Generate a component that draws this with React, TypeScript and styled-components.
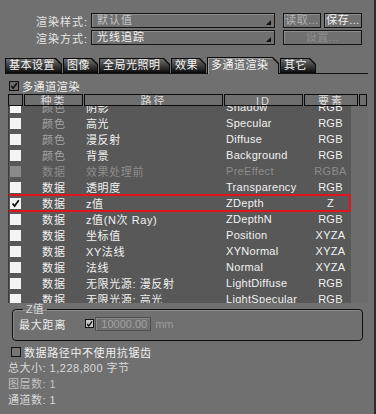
import styled, { createGlobalStyle } from "styled-components";

const GlobalStyle = createGlobalStyle`
  html, body {
    margin: 0;
    padding: 0;
    background: #707070;
  }
  body {
    font-family: "Liberation Sans", "Noto Sans CJK SC", sans-serif;
    font-size: 11px;
  }
`;

type Pass = {
  kind: string;
  path: string;
  id: string;
  elem: string;
  disabled?: boolean;
  checked?: boolean;
  marked?: boolean;
};

const passes: Pass[] = [
  { kind: "颜色", path: "阴影", id: "Shadow", elem: "RGB" },
  { kind: "颜色", path: "高光", id: "Specular", elem: "RGB" },
  { kind: "颜色", path: "漫反射", id: "Diffuse", elem: "RGB" },
  { kind: "颜色", path: "背景", id: "Background", elem: "RGB" },
  { kind: "数据", path: "效果处理前", id: "PreEffect", elem: "RGBA", disabled: true },
  { kind: "数据", path: "透明度", id: "Transparency", elem: "RGB" },
  { kind: "数据", path: "z值", id: "ZDepth", elem: "Z", checked: true, marked: true },
  { kind: "数据", path: "z值(N次 Ray)", id: "ZDepthN", elem: "RGB" },
  { kind: "数据", path: "坐标值", id: "Position", elem: "XYZA" },
  { kind: "数据", path: "XY法线", id: "XYNormal", elem: "XYZA" },
  { kind: "数据", path: "法线", id: "Normal", elem: "XYZA" },
  { kind: "数据", path: "无限光源: 漫反射", id: "LightDiffuse", elem: "RGB" },
  { kind: "数据", path: "无限光源: 高光", id: "LightSpecular", elem: "RGB" },
];

const tabs = ["基本设置", "图像", "全局光照明", "效果", "多通道渲染", "其它"];
const tabWidths = [57, 35, 71, 35, 72, 36];

function Check({ color = "#111" }: { color?: string }) {
  return (
    <svg width="9" height="9" viewBox="0 0 9 9">
      <path d="M1.5 4.5 L3.6 7 L7.8 1.2" stroke={color} strokeWidth="1.8" fill="none" />
    </svg>
  );
}

function App() {
  return (
    <Panel>
      <GlobalStyle />
      <FormRow>
        <FieldLabel>渲染样式:</FieldLabel>
        <Select $dim>默认值</Select>
        <ButtonGroup>
          <Button $w={38} $tone="dim">读取...</Button>
          <Button $w={38}>保存...</Button>
        </ButtonGroup>
      </FormRow>
      <FormRow>
        <FieldLabel>渲染方式:</FieldLabel>
        <Select>光线追踪</Select>
        <ButtonGroup>
          <Button $w={79} $tone="off">设置...</Button>
        </ButtonGroup>
      </FormRow>

      <TabBar>
        {tabs.map((t, i) => (
          <Tab key={t} $active={i === 4} $w={tabWidths[i]}>
            <TabFace $active={i === 4}>{t}</TabFace>
          </Tab>
        ))}
      </TabBar>

      <CheckRow>
        <Box $fill="#6a6a6a">
          <Check />
        </Box>
        <span>多通道渲染</span>
      </CheckRow>

      <Table>
        <HeadRow>
          <HeadCell />
          <HeadCell>种类</HeadCell>
          <HeadCell>路径</HeadCell>
          <HeadCell>ID</HeadCell>
          <HeadCell>要素</HeadCell>
          <HeadCell />
        </HeadRow>
        <BodyWrap>
          <List>
            <ListInner>
              {passes.map((p) => (
                <Row key={p.id} $marked={p.marked} $disabled={p.disabled}>
                  <RowBoxCell>
                    <RowBox $disabled={p.disabled}>{p.checked && <Check />}</RowBox>
                  </RowBoxCell>
                  <KindCell $color={p.kind === "颜色" ? "#a4a4a4" : undefined}>{p.kind}</KindCell>
                  <PathCell>{p.path}</PathCell>
                  <IdCell>{p.id}</IdCell>
                  <ElemCell>{p.elem}</ElemCell>
                </Row>
              ))}
            </ListInner>
          </List>
          <Track />
        </BodyWrap>
      </Table>

      <Group>
        <Legend>Z值</Legend>
        <GroupRow>
          <span>最大距离</span>
          <Box $fill="#c4c4c4" $small>
            <Check />
          </Box>
          <NumberInput>10000.00</NumberInput>
          <Unit>mm</Unit>
        </GroupRow>
      </Group>

      <CheckRow $tight>
        <Box $fill="#767676" />
        <span>数据路径中不使用抗锯齿</span>
      </CheckRow>

      <Info>
        <InfoLine>总大小: 1,228,800 字节</InfoLine>
        <InfoLine $dim>图层数: 1</InfoLine>
        <InfoLine>通道数: 1</InfoLine>
      </Info>
    </Panel>
  );
}

export default App;

const Panel = styled.div`
  position: relative;
  width: 376px;
  height: 414px;
  box-sizing: border-box;
  padding-top: 13px;
  background: #707070;
  border-right: 2px solid #2c2c2c;
  color: #ececec;
  overflow: hidden;
  display: flex;
  flex-direction: column;
`;

const FormRow = styled.div`
  display: flex;
  align-items: center;
  height: 15px;
  margin-bottom: 2px;
`;

const FieldLabel = styled.div`
  width: 88px;
  padding-right: 3px;
  text-align: right;
  letter-spacing: 1px;
  color: #e6e6e6;
`;

const Select = styled.div<{ $dim?: boolean }>`
  position: relative;
  width: 184px;
  height: 15px;
  box-sizing: border-box;
  border: 1px solid #141414;
  box-shadow: inset 1px 1px 0 #8e8e8e;
  padding-left: 5px;
  line-height: 13px;
  letter-spacing: 1px;
  color: ${(p) => (p.$dim ? "#c4c4c4" : "#f2f2f2")};

  &::after {
    content: "";
    position: absolute;
    right: 3px;
    bottom: 2px;
    border-left: 5px solid transparent;
    border-bottom: 5px solid #111;
  }
`;

const ButtonGroup = styled.div`
  display: flex;
  gap: 3px;
  margin-left: 8px;
`;

const Button = styled.div<{ $w: number; $tone?: "dim" | "off" }>`
  width: ${(p) => p.$w}px;
  height: 15px;
  box-sizing: border-box;
  border: 1px solid #141414;
  box-shadow: inset 1px 1px 0 #8e8e8e;
  text-align: center;
  line-height: 13px;
  letter-spacing: 0.5px;
  color: ${(p) => (p.$tone === "dim" ? "#b2b2b2" : p.$tone === "off" ? "#8e8e8e" : "#f2f2f2")};
`;

const TabBar = styled.div`
  display: flex;
  align-items: flex-end;
  gap: 1px;
  width: 363px;
  height: 17px;
  margin: 9px 0 0 5px;
  border-bottom: 1px solid #111;
`;

const Tab = styled.div<{ $active?: boolean; $w: number }>`
  width: ${(p) => p.$w}px;
  height: ${(p) => (p.$active ? 17 : 15)}px;
  box-sizing: border-box;
  padding: 1px 1px ${(p) => (p.$active ? 0 : 1)}px 1px;
  margin-bottom: ${(p) => (p.$active ? -1 : 0)}px;
  background: #0c0c0c;
  clip-path: polygon(0 0, calc(100% - 6px) 0, 100% 6px, 100% 100%, 0 100%);
`;

const TabFace = styled.div<{ $active?: boolean }>`
  height: 100%;
  box-sizing: border-box;
  padding-left: 3px;
  line-height: ${(p) => (p.$active ? 15 : 13)}px;
  letter-spacing: 0.5px;
  color: #f4f4f4;
  white-space: nowrap;
  background: ${(p) =>
    p.$active ? "#707070" : "linear-gradient(#6c6c6c 0%, #3a3a3a 55%, #121212 100%)"};
  box-shadow: ${(p) => (p.$active ? "inset 1px 1px 0 #9a9a9a" : "none")};
  clip-path: polygon(0 0, calc(100% - 6px) 0, 100% 6px, 100% 100%, 0 100%);
`;

const CheckRow = styled.div<{ $tight?: boolean }>`
  display: flex;
  align-items: center;
  gap: 3px;
  height: 12px;
  margin: ${(p) => (p.$tight ? "5px 0 0 11px" : "6px 0 0 9px")};
  letter-spacing: 0.6px;
  color: #f0f0f0;
`;

const Box = styled.div<{ $fill: string; $small?: boolean }>`
  width: ${(p) => (p.$small ? 9 : 10)}px;
  height: ${(p) => (p.$small ? 9 : 10)}px;
  box-sizing: border-box;
  border: 1px solid #141414;
  background: ${(p) => p.$fill};
  display: flex;
  align-items: center;
  justify-content: center;
  svg {
    width: 8px;
    height: 8px;
  }
`;

const Table = styled.div`
  margin: 2px 0 0 8px;
  width: 360px;
  display: flex;
  flex-direction: column;
`;

const HeadRow = styled.div`
  display: grid;
  grid-template-columns: 16px 60px 140px 80px 55px 9px;
  height: 12px;
`;

const HeadCell = styled.div`
  box-sizing: border-box;
  border: 1px solid #0c0c0c;
  margin-right: 1px;
  background: #6e6e6e;
  color: #dcdcdc;
  text-align: center;
  line-height: 12px;
  letter-spacing: 2px;
  overflow: hidden;
`;

const BodyWrap = styled.div`
  display: flex;
  height: 197px;
`;

const List = styled.div`
  width: 343px;
  height: 100%;
  background: #585858;
  border-left: 1px solid #3c3c3c;
  box-sizing: border-box;
  overflow: hidden;
`;

const ListInner = styled.div`
  margin-top: -7px;
`;

const Track = styled.div`
  width: 17px;
  height: 100%;
  background: #6c6c6c;
`;

const Row = styled.div<{ $marked?: boolean; $disabled?: boolean }>`
  position: relative;
  display: grid;
  grid-template-columns: 15px 60px 140px 80px 47px;
  height: 16px;
  align-items: center;
  color: ${(p) => (p.$disabled ? "#8c8c8c" : "#f2f2f2")};

  &::after {
    content: "";
    display: ${(p) => (p.$marked ? "block" : "none")};
    position: absolute;
    top: -1px;
    bottom: -1px;
    left: -3px;
    right: 0;
    border: 2px solid #e4141c;
  }
`;

const RowBoxCell = styled.div`
  display: flex;
  align-items: center;
  padding-left: 1px;
`;

const RowBox = styled.div<{ $disabled?: boolean }>`
  width: 11px;
  height: 11px;
  background: ${(p) => (p.$disabled ? "#8a8a8a" : "#f4f4f4")};
  display: flex;
  align-items: center;
  justify-content: center;
`;

const KindCell = styled.div<{ $color?: string }>`
  text-align: center;
  letter-spacing: 1px;
  ${(p) => (p.$color ? `color: ${p.$color};` : "")}
`;

const PathCell = styled.div`
  padding-left: 2px;
  letter-spacing: 0.6px;
  white-space: nowrap;
`;

const IdCell = styled.div`
  padding-left: 2px;
  letter-spacing: 0.3px;
`;

const ElemCell = styled.div`
  padding-left: 6px;
  text-align: center;
  letter-spacing: 0.3px;
`;

const Group = styled.fieldset`
  margin: 0 0 0 12px;
  width: 351px;
  height: 38px;
  box-sizing: border-box;
  padding: 0 0 0 6px;
  border: 1px solid #0e0e0e;
  border-radius: 4px;
  box-shadow: inset 1px 1px 0 #8c8c8c;
`;

const Legend = styled.legend`
  padding: 0 3px;
  margin-left: 4px;
  color: #dadada;
  line-height: 12px;
`;

const GroupRow = styled.div`
  display: flex;
  align-items: center;
  height: 17px;
  color: #ececec;
  letter-spacing: 0.8px;

  & > span:first-child {
    margin-right: 19px;
  }
`;

const NumberInput = styled.div`
  width: 56px;
  height: 14px;
  margin-left: 1px;
  box-sizing: border-box;
  border: 1px solid #4e4e4e;
  box-shadow: inset 1px 1px 0 #8a8a8a;
  padding-right: 3px;
  text-align: right;
  line-height: 12px;
  color: #a4a4a4;
  letter-spacing: 0;
`;

const Unit = styled.span`
  margin-left: 4px;
  color: #9a9a9a;
  letter-spacing: 0;
`;

const Info = styled.div`
  margin: 2px 0 0 8px;
  display: flex;
  flex-direction: column;
`;

const InfoLine = styled.div<{ $dim?: boolean }>`
  height: 16px;
  line-height: 16px;
  letter-spacing: 0.5px;
  color: ${(p) => (p.$dim ? "#c2c2c2" : "#dadada")};
`;
